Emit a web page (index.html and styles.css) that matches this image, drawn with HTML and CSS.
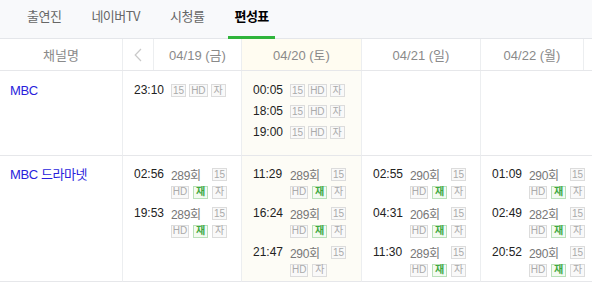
FILE: index.html
```html
<!DOCTYPE html>
<html lang="ko">
<head>
<meta charset="utf-8">
<title>편성표</title>
<link rel="stylesheet" href="styles.css">
</head>
<body>
<nav class="tabs">
  <a class="tab">출연진</a>
  <a class="tab">네이버TV</a>
  <a class="tab">시청률</a>
  <a class="tab tab--active">편성표</a>
</nav>

<div class="head">
  <div class="hcell">채널명</div>
  <div class="hcell hcell--nav">
    <svg width="8" height="14" viewBox="0 0 8 14"><path d="M7 1 L1.2 7 L7 13" fill="none" stroke="#c9c9c9" stroke-width="1.2"/></svg>
  </div>
  <div class="hcell">04/19 (금)</div>
  <div class="hcell hcell--today">04/20 (토)</div>
  <div class="hcell">04/21 (일)</div>
  <div class="hcell">04/22 (월)</div>
  <div class="hcell hcell--last"></div>
</div>

<div class="grid">
  <!-- row 1 -->
  <div class="cell cell--ch cell--r1"><a class="ch">MBC</a></div>
  <div class="cell cell--r1">
    <div class="item"><span class="time">23:10</span><span class="badges"><i class="b">15</i><i class="b">HD</i><i class="b">자</i></span></div>
  </div>
  <div class="cell cell--today cell--r1">
    <div class="item"><span class="time">00:05</span><span class="badges"><i class="b">15</i><i class="b">HD</i><i class="b">자</i></span></div>
    <div class="item"><span class="time">18:05</span><span class="badges"><i class="b">15</i><i class="b">HD</i><i class="b">자</i></span></div>
    <div class="item"><span class="time">19:00</span><span class="badges"><i class="b">15</i><i class="b">HD</i><i class="b">자</i></span></div>
  </div>
  <div class="cell cell--r1"></div>
  <div class="cell cell--r1 cell--end"></div>

  <!-- row 2 -->
  <div class="cell cell--ch"><a class="ch">MBC 드라마넷</a></div>
  <div class="cell">
    <div class="item"><span class="time">02:56</span><div class="info"><div class="l1"><span class="ep">289회</span><i class="b">15</i></div><div class="l2"><i class="b">HD</i><i class="b b--g">재</i><i class="b">자</i></div></div></div>
    <div class="item"><span class="time">19:53</span><div class="info"><div class="l1"><span class="ep">289회</span><i class="b">15</i></div><div class="l2"><i class="b">HD</i><i class="b b--g">재</i><i class="b">자</i></div></div></div>
  </div>
  <div class="cell cell--today">
    <div class="item"><span class="time">11:29</span><div class="info"><div class="l1"><span class="ep">289회</span><i class="b">15</i></div><div class="l2"><i class="b">HD</i><i class="b b--g">재</i><i class="b">자</i></div></div></div>
    <div class="item"><span class="time">16:24</span><div class="info"><div class="l1"><span class="ep">289회</span><i class="b">15</i></div><div class="l2"><i class="b">HD</i><i class="b b--g">재</i><i class="b">자</i></div></div></div>
    <div class="item"><span class="time">21:47</span><div class="info"><div class="l1"><span class="ep">290회</span><i class="b">15</i></div><div class="l2"><i class="b">HD</i><i class="b">자</i></div></div></div>
  </div>
  <div class="cell">
    <div class="item"><span class="time">02:55</span><div class="info"><div class="l1"><span class="ep">290회</span><i class="b">15</i></div><div class="l2"><i class="b">HD</i><i class="b b--g">재</i><i class="b">자</i></div></div></div>
    <div class="item"><span class="time">04:31</span><div class="info"><div class="l1"><span class="ep">206회</span><i class="b">15</i></div><div class="l2"><i class="b">HD</i><i class="b b--g">재</i><i class="b">자</i></div></div></div>
    <div class="item"><span class="time">11:30</span><div class="info"><div class="l1"><span class="ep">289회</span><i class="b">15</i></div><div class="l2"><i class="b">HD</i><i class="b b--g">재</i><i class="b">자</i></div></div></div>
  </div>
  <div class="cell cell--end">
    <div class="item"><span class="time">01:09</span><div class="info"><div class="l1"><span class="ep">290회</span><i class="b">15</i></div><div class="l2"><i class="b">HD</i><i class="b b--g">재</i><i class="b">자</i></div></div></div>
    <div class="item"><span class="time">02:49</span><div class="info"><div class="l1"><span class="ep">282회</span><i class="b">15</i></div><div class="l2"><i class="b">HD</i><i class="b b--g">재</i><i class="b">자</i></div></div></div>
    <div class="item"><span class="time">20:52</span><div class="info"><div class="l1"><span class="ep">290회</span><i class="b">15</i></div><div class="l2"><i class="b">HD</i><i class="b b--g">재</i><i class="b">자</i></div></div></div>
  </div>
</div>
</body>
</html>
```

FILE: styles.css
```css
* { box-sizing: border-box; }

html, body {
  margin: 0;
  padding: 0;
  background: #fff;
  font-family: "Liberation Sans", "Noto Sans CJK KR", sans-serif;
  color: #222;
}

/* tabs */
.tabs {
  display: flex;
  gap: 18px;
  height: 39px;
  padding-left: 21px;
  background: #f8f9fb;
  border-bottom: 1px solid #e4e6ea;
}

.tab {
  display: block;
  height: 38px;
  padding: 0 6px;
  line-height: 32px;
  font-family: "Noto Sans CJK KR", "Liberation Sans", sans-serif;
  font-size: 13px;
  letter-spacing: -0.5px;
  color: #666;
}

.tab--active {
  height: 39px;
  margin-bottom: -1px;
  color: #000;
  font-weight: 700;
  border-bottom: 3px solid #2fb43b;
}

/* header */
.head {
  display: grid;
  grid-template-columns: 123px 31px 88px 120px 119px 103px 1fr;
  height: 32px;
  border-bottom: 1px solid #e6e7ea;
}

.hcell {
  display: flex;
  align-items: center;
  justify-content: center;
  border-right: 1px solid #eceef0;
  font-size: 13px;
  color: #8a8a8a;
}

.hcell--nav { padding-top: 1px; }
.hcell--today { background: #fffcf1; }
.hcell--last { border-right: 0; }

/* body grid */
.grid {
  display: grid;
  grid-template-columns: 123px 119px 120px 119px 1fr;
}

.cell {
  padding: 10px 0 2px 11px;
  border-right: 1px solid #eceef0;
  border-bottom: 1px solid #e6e7ea;
  display: flex;
  flex-direction: column;
  gap: 4px;
}

.cell--r1 { min-height: 85px; padding-top: 11px; }
.cell--ch { padding-left: 10px; }
.cell--today { background: #fdfcf6; }
.cell--end { border-right: 0; }

.ch {
  display: block;
  line-height: 17px;
  font-size: 13px;
  letter-spacing: -0.4px;
  color: #2a1ddc;
}

.item {
  display: flex;
  align-items: flex-start;
}

.time {
  width: 37px;
  flex: none;
  height: 17px;
  line-height: 17px;
  font-size: 12px;
  color: #222;
}

.badges {
  display: flex;
  align-items: center;
  gap: 3px;
  height: 17px;
}

.info {
  width: 56px;
  display: flex;
  flex-direction: column;
}

.l1 {
  display: flex;
  align-items: center;
  justify-content: space-between;
  height: 17px;
}

.l2 {
  display: flex;
  align-items: center;
  gap: 4px;
  height: 18px;
}

.ep {
  font-size: 12px;
  color: #777;
  letter-spacing: -0.3px;
}

.b {
  display: inline-flex;
  align-items: center;
  justify-content: center;
  min-width: 15px;
  height: 13px;
  padding: 0 1px;
  border: 1px solid #dcdcdc;
  background: #f9f9f9;
  font-style: normal;
  font-size: 10px;
  line-height: 1;
  color: #aaa;
}

.b--g {
  border-color: #b9e0b9;
  background: #f3fbf2;
  color: #3fa83f;
  font-weight: 700;
}
```
